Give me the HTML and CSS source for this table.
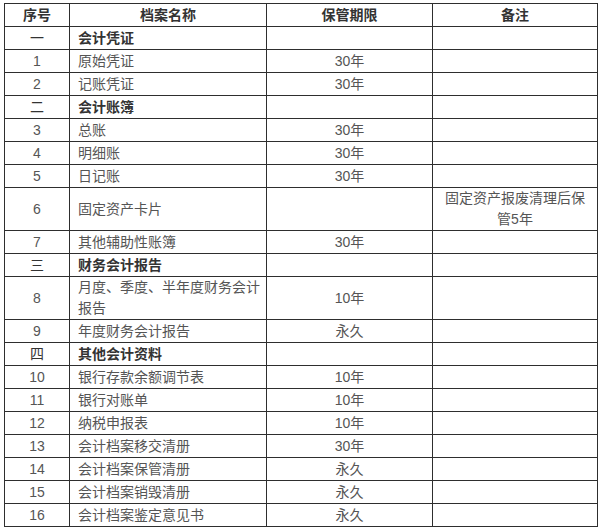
FILE: index.html
```html
<!DOCTYPE html>
<html lang="zh">
<head>
<meta charset="utf-8">
<title>会计档案保管期限</title>
<link rel="stylesheet" href="styles.css">
</head>
<body>
<table class="archive">
  <colgroup>
    <col class="c-no">
    <col class="c-name">
    <col class="c-term">
    <col class="c-note">
  </colgroup>
  <thead>
    <tr><th>序号</th><th>档案名称</th><th>保管期限</th><th>备注</th></tr>
  </thead>
  <tbody>
    <tr class="group"><td class="no">一</td><td class="name">会计凭证</td><td></td><td></td></tr>
    <tr><td class="no">1</td><td class="name">原始凭证</td><td class="term">30年</td><td></td></tr>
    <tr><td class="no">2</td><td class="name">记账凭证</td><td class="term">30年</td><td></td></tr>
    <tr class="group"><td class="no">二</td><td class="name">会计账簿</td><td></td><td></td></tr>
    <tr><td class="no">3</td><td class="name">总账</td><td class="term">30年</td><td></td></tr>
    <tr><td class="no">4</td><td class="name">明细账</td><td class="term">30年</td><td></td></tr>
    <tr><td class="no">5</td><td class="name">日记账</td><td class="term">30年</td><td></td></tr>
    <tr><td class="no">6</td><td class="name">固定资产卡片</td><td class="term"></td><td class="note">固定资产报废清理后保管5年</td></tr>
    <tr><td class="no">7</td><td class="name">其他辅助性账簿</td><td class="term">30年</td><td></td></tr>
    <tr class="group"><td class="no">三</td><td class="name">财务会计报告</td><td></td><td></td></tr>
    <tr><td class="no">8</td><td class="name">月度、季度、半年度财务会计报告</td><td class="term">10年</td><td></td></tr>
    <tr><td class="no">9</td><td class="name">年度财务会计报告</td><td class="term">永久</td><td></td></tr>
    <tr class="group"><td class="no">四</td><td class="name">其他会计资料</td><td></td><td></td></tr>
    <tr><td class="no">10</td><td class="name">银行存款余额调节表</td><td class="term">10年</td><td></td></tr>
    <tr><td class="no">11</td><td class="name">银行对账单</td><td class="term">10年</td><td></td></tr>
    <tr><td class="no">12</td><td class="name">纳税申报表</td><td class="term">10年</td><td></td></tr>
    <tr><td class="no">13</td><td class="name">会计档案移交清册</td><td class="term">30年</td><td></td></tr>
    <tr><td class="no">14</td><td class="name">会计档案保管清册</td><td class="term">永久</td><td></td></tr>
    <tr><td class="no">15</td><td class="name">会计档案销毁清册</td><td class="term">永久</td><td></td></tr>
    <tr><td class="no">16</td><td class="name">会计档案鉴定意见书</td><td class="term">永久</td><td></td></tr>
  </tbody>
</table>
</body>
</html>
```
FILE: styles.css
```css
html, body {
  background: #ffffff;
}
body {
  margin: 3px 0 0 4px;
  font-family: "Liberation Sans", "Noto Sans CJK SC", sans-serif;
  font-size: 14px;
  color: #555555;
}
.archive {
  border-collapse: collapse;
  table-layout: fixed;
  width: 593px;
}
.c-no { width: 65px; }
.c-name { width: 197px; }
.c-term { width: 166px; }
.c-note { width: 165px; }
.archive th,
.archive td {
  border: 1px solid #2e2e2e;
  padding: 0 6px;
  line-height: 21px;
  height: 22px;
  vertical-align: middle;
}
.archive th {
  font-weight: bold;
  color: #333333;
  text-align: center;
}
.archive .no,
.archive .term,
.archive .note {
  text-align: center;
}
.archive .name {
  text-align: left;
  padding-left: 8px;
  padding-right: 0;
}
.archive .group .name,
.archive .group .no {
  font-weight: bold;
  color: #333333;
}
.archive .group .no {
  font-weight: normal;
}
```
